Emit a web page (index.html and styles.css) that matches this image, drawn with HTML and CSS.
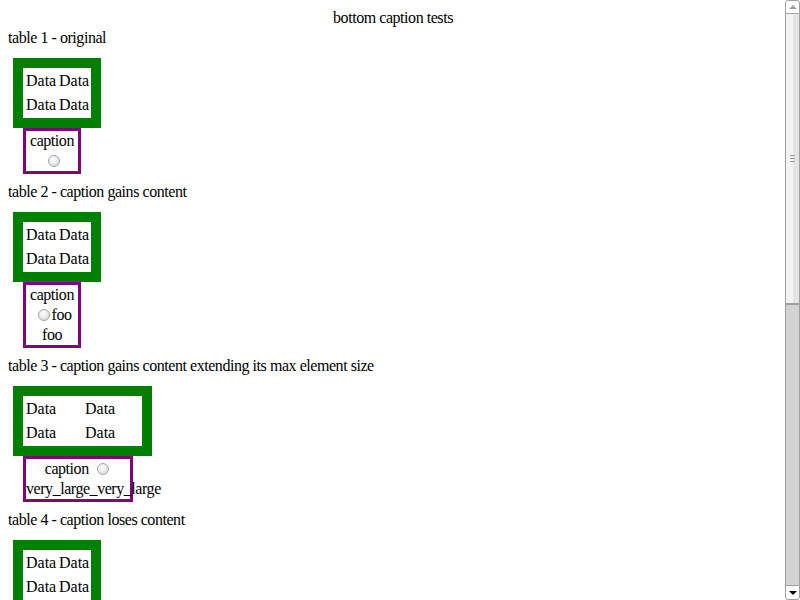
FILE: index.html
```html
<!DOCTYPE html>
<html>
<head>
<meta charset="utf-8">
<title>bottom caption tests</title>
<link rel="stylesheet" href="styles.css">
</head>
<body>
<div class="page">
  <main class="content">
    <div class="title">bottom caption tests</div>

    <section class="test">
      <div class="label">table 1 - original</div>
      <div class="tbl tbl-narrow">
        <div class="cell">Data</div><div class="cell">Data</div>
        <div class="cell">Data</div><div class="cell">Data</div>
      </div>
      <div class="caption cap-narrow">
        <div class="line">caption</div>
        <div class="line"><span class="radio"></span></div>
      </div>
    </section>

    <section class="test">
      <div class="label">table 2 - caption gains content</div>
      <div class="tbl tbl-narrow">
        <div class="cell">Data</div><div class="cell">Data</div>
        <div class="cell">Data</div><div class="cell">Data</div>
      </div>
      <div class="caption cap-narrow">
        <div class="line">caption</div>
        <div class="line"><span class="radio"></span>foo</div>
        <div class="line">foo</div>
      </div>
    </section>

    <section class="test">
      <div class="label">table 3 - caption gains content extending its max element size</div>
      <div class="tbl tbl-wide">
        <div class="cell">Data</div><div class="cell">Data</div>
        <div class="cell">Data</div><div class="cell">Data</div>
      </div>
      <div class="caption cap-wide">
        <div class="line">caption <span class="radio"></span></div>
        <div class="line line-left">very_large_very_large</div>
      </div>
    </section>

    <section class="test">
      <div class="label">table 4 - caption loses content</div>
      <div class="tbl tbl-narrow">
        <div class="cell">Data</div><div class="cell">Data</div>
        <div class="cell">Data</div><div class="cell">Data</div>
      </div>
      <div class="caption cap-narrow">
        <div class="line">caption</div>
        <div class="line"><span class="radio"></span></div>
      </div>
    </section>
  </main>

  <div class="scrollbar">
    <div class="sb-btn sb-up"><span class="arrow-up"></span></div>
    <div class="sb-thumb"><span class="grip"></span></div>
    <div class="sb-track"></div>
    <div class="sb-btn sb-down"><span class="arrow-down"></span></div>
  </div>
</div>
</body>
</html>
```

FILE: styles.css
```css
html, body {
  margin: 0;
  padding: 0;
  height: 100%;
  overflow: hidden;
  background: #fff;
}

body {
  font-family: "Liberation Serif", "Times New Roman", serif;
  font-size: 16px;
  line-height: 20px;
  letter-spacing: -0.45px;
  color: #000;
}

.page {
  display: flex;
  height: 100vh;
}

.content {
  flex: 1;
  min-width: 0;
  padding: 8px;
  overflow: hidden;
}

.title {
  text-align: center;
  height: 20px;
  padding-left: 1px;
}

.label {
  height: 20px;
  white-space: nowrap;
}

.test {
  margin-bottom: 8px;
}

.tbl {
  display: grid;
  grid-template-rows: 22px 22px;
  gap: 2px;
  padding: 2px;
  border: 10px solid #008000;
  margin: 10px 0 0 5px;
  width: max-content;
  background: #fff;
}

.tbl-narrow {
  grid-template-columns: 31px 31px;
}

.tbl-wide {
  grid-template-columns: 57px 56px;
}

.cell {
  padding: 1px;
  line-height: 20px;
  letter-spacing: 0;
  white-space: nowrap;
}

.caption {
  box-sizing: border-box;
  border: 3px solid #800080;
  margin-left: 15px;
  text-align: center;
}

.cap-narrow {
  width: 58px;
}

.cap-wide {
  width: 110px;
}

.line {
  height: 20px;
  white-space: nowrap;
}

.line-left {
  text-align: left;
}

.radio {
  display: inline-block;
  box-sizing: border-box;
  width: 12px;
  height: 12px;
  margin: 0 2px 0 5px;
  border-radius: 50%;
  border: 1px solid #a6a6a6;
  background: radial-gradient(circle at 40% 35%, #ffffff 0%, #ececec 45%, #cfcfcf 100%);
  vertical-align: -1px;
}

/* fake scrollbar */
.scrollbar {
  width: 15px;
  flex: none;
  display: flex;
  flex-direction: column;
  background: #fff;
}

.sb-btn {
  box-sizing: border-box;
  height: 14px;
  border: 1px solid #a0a0a0;
  background: #fff;
  display: flex;
  align-items: center;
  justify-content: center;
}

.sb-up {
  border-radius: 3px 3px 0 0;
}

.sb-down {
  height: 15px;
  border-radius: 0 0 3px 3px;
}

.arrow-up {
  width: 0;
  height: 0;
  border-left: 4px solid transparent;
  border-right: 4px solid transparent;
  border-bottom: 4px solid #a0a0a0;
}

.arrow-down {
  width: 0;
  height: 0;
  border-left: 4px solid transparent;
  border-right: 4px solid transparent;
  border-top: 4px solid #000;
}

.sb-thumb {
  box-sizing: border-box;
  height: 290px;
  border: 1px solid #a0a0a0;
  border-top: none;
  background: linear-gradient(to right, #f3f3f3 0%, #f3f3f3 50%, #e5e5e5 50%, #e5e5e5 100%);
  display: flex;
  align-items: center;
  justify-content: center;
}

.grip {
  display: block;
  width: 5px;
  height: 5px;
  border-top: 1px solid #9a9a9a;
  border-bottom: 1px solid #9a9a9a;
  background: linear-gradient(#9a9a9a, #9a9a9a) center / 100% 1px no-repeat;
}

.sb-track {
  flex: 1;
  box-sizing: border-box;
  border: 1px solid #a0a0a0;
  border-bottom: none;
  background: #d3d3d3;
}
```
